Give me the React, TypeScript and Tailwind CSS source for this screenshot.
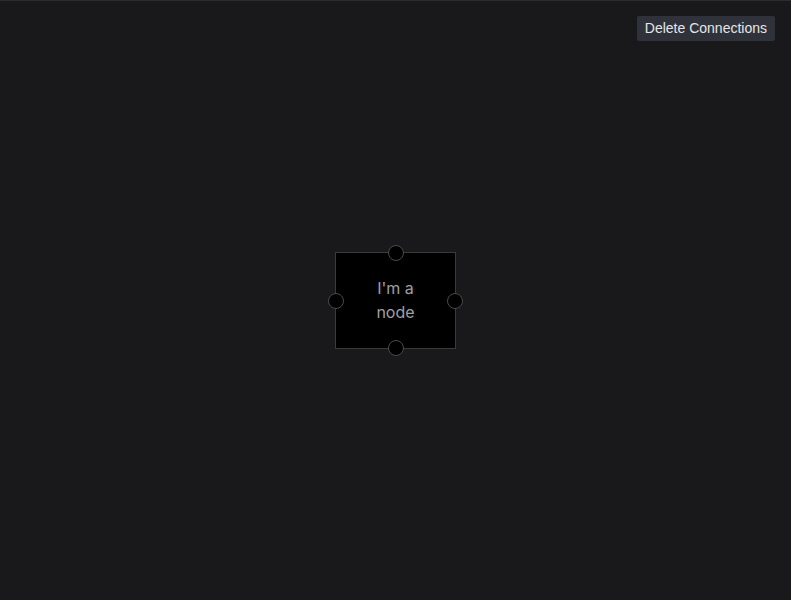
export default function App() {
  return (
    <div
      className="relative w-[791px] h-[600px] overflow-hidden bg-[#19191b] border-t border-[#2c2c30]"
      style={{ fontFamily: 'Inter, "Liberation Sans", sans-serif' }}
    >
      {/* toolbar */}
      <button
        className="absolute top-[15px] right-[16px] h-[25px] px-2 bg-[#2f323a] text-[#e6e6e6] text-[14px] leading-[25px] rounded-[2px]"
        style={{ fontFamily: '"Liberation Sans", Arial, sans-serif' }}
      >
        Delete Connections
      </button>

      {/* node */}
      <div className="absolute left-[335px] top-[251px] w-[121px] h-[97px] bg-black border border-[#3a3a3a] flex items-center justify-center">
        <div className="text-[#a0a0a0] text-[16px] leading-[24px] text-center w-[60px] -mt-[2px]">
          I'm a node
        </div>
        <span className="absolute left-1/2 -top-[8px] -translate-x-1/2 w-[16px] h-[16px] rounded-full bg-black border border-[#4a4a4a]" />
        <span className="absolute left-1/2 -bottom-[8px] -translate-x-1/2 w-[16px] h-[16px] rounded-full bg-black border border-[#4a4a4a]" />
        <span className="absolute top-1/2 -left-[8px] -translate-y-1/2 w-[16px] h-[16px] rounded-full bg-black border border-[#4a4a4a]" />
        <span className="absolute top-1/2 -right-[8px] -translate-y-1/2 w-[16px] h-[16px] rounded-full bg-black border border-[#4a4a4a]" />
      </div>
    </div>
  );
}
